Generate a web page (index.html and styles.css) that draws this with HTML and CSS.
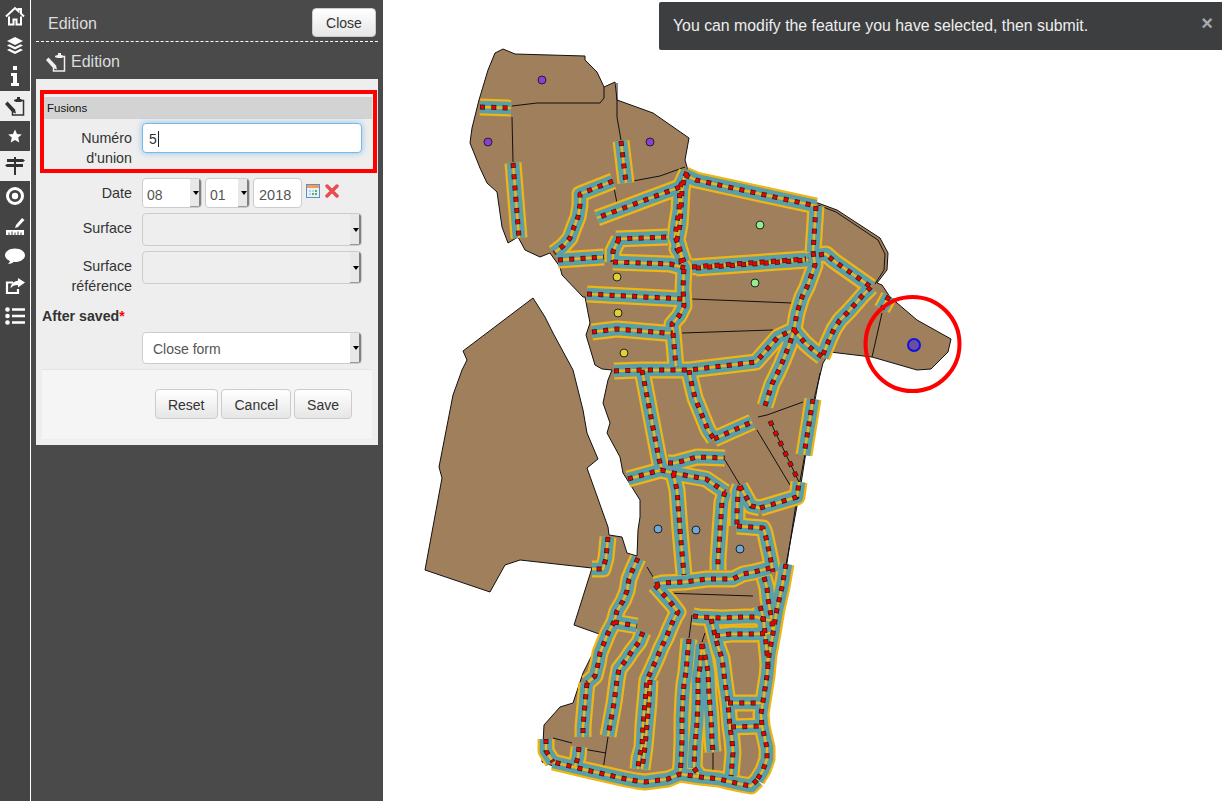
FILE: index.html
```html
<!DOCTYPE html>
<html lang="en">
<head>
  <meta charset="UTF-8" />
  <meta name="viewport" content="width=device-width, initial-scale=1.0"/>
  <title>Edition</title>
  <link rel="stylesheet" href="styles.css">
</head>
<body>
  <svg class="sprites" width="0" height="0">
    <symbol id="icon-edit" viewBox="0 0 20 20">
      <path d="M9 4.500h9.500v14.500H7.500v-3" fill="none" stroke="currentColor" stroke-width="1.5"/>
      <path d="M10.500 6V3H12V1h3v2h1.500v3z" fill="currentColor"/>
      <path d="M0 8l2.500-2.500 7.500 8 1 4-4-1.500z" fill="currentColor"/>
    </symbol>
  </svg>

  <nav class="rail">
    <a class="rail-item">
      <svg viewBox="0 0 20 20"><path d="M1 10.500L10 2l3.500 3.300V3H16v4.600l3 2.900" fill="none" stroke="currentColor" stroke-width="2"/><path d="M4 10.500V18.500h4.500v-5h3v5H16v-8" fill="none" stroke="currentColor" stroke-width="2"/></svg>
    </a>
    <a class="rail-item">
      <svg viewBox="0 0 20 20"><path d="M10 1l8 4-8 4-8-4zM4.500 8.200L10 11l5.500-2.800 2.500 1.300-8 4-8-4zM4.500 12.700L10 15.500l5.500-2.800 2.500 1.300-8 4-8-4z" fill="currentColor"/></svg>
    </a>
    <a class="rail-item">
      <svg viewBox="0 0 20 20"><path d="M8 0h4v4H8zM6 7h6v10h2v3H6v-3h2v-7H6z" fill="currentColor"/></svg>
    </a>
    <a class="rail-item is-active">
      <svg><use href="#icon-edit"/></svg>
    </a>
    <a class="rail-item">
      <svg viewBox="0 0 20 20"><path d="M10 3.500l2 4.500 4.800.4-3.600 3.200 1.100 4.800L10 13.900l-4.300 2.500 1.100-4.800-3.600-3.200L8 8z" fill="currentColor"/></svg>
    </a>
    <a class="rail-item is-active">
      <svg viewBox="0 0 20 20"><path d="M9 1h2v2h7l2 1.500L18 6h-7v2h7v3h-7v8H9v-8H2L0 9.500 2 8h7V6H2V3h7z" fill="currentColor"/></svg>
    </a>
    <a class="rail-item">
      <svg viewBox="0 0 20 20"><circle cx="10" cy="10" r="7.5" fill="none" stroke="currentColor" stroke-width="3"/><circle cx="10" cy="10" r="3.2" fill="currentColor"/></svg>
    </a>
    <a class="rail-item">
      <svg viewBox="0 0 20 20"><path d="M11 9l6-7 2.500 2-6.500 7-3 1zM1 14h18v5H1z" fill="currentColor"/><path d="M4 16.500V19M7 15.500V19M10 16.500V19M13 15.500V19M16 16.500V19" stroke="#444" stroke-width="1"/></svg>
    </a>
    <a class="rail-item">
      <svg viewBox="0 0 20 20"><path d="M10 2.500c5.500 0 10 2.900 10 6.800s-4.500 6.800-10 6.800h-1.500C7 17.500 5 18 3 18c1-.8 1.800-2 2-3C2 13.800 0 11.800 0 9.300 0 5.400 4.500 2.500 10 2.500z" fill="currentColor"/></svg>
    </a>
    <a class="rail-item">
      <svg viewBox="0 0 20 20"><path d="M13 2l7 4.500-7 5V9c-3.500 0-6 1-7.500 3.500C5.800 8 8.500 5 13 4.700z" fill="currentColor"/><path d="M8 6.500H2V17h11v-4" fill="none" stroke="currentColor" stroke-width="2.2"/></svg>
    </a>
    <a class="rail-item">
      <svg viewBox="0 0 20 20"><circle cx="2.500" cy="3.500" r="2.300" fill="currentColor"/><circle cx="2.500" cy="10" r="2.300" fill="currentColor"/><circle cx="2.500" cy="16.500" r="2.300" fill="currentColor"/><path d="M7 2.200h13v2.600H7zM7 8.700h13v2.600H7zM7 15.200h13v2.600H7z" fill="currentColor"/></svg>
    </a>
  </nav>

  <aside class="panel">
    <header class="panel-head">
      <h2>Edition</h2>
      <button class="btn btn-close" type="button">Close</button>
    </header>
    <h3 class="panel-sub"><svg><use href="#icon-edit"/></svg>Edition</h3>

    <form class="form">
      <div class="fusions">
        <div class="legend">Fusions</div>
        <div class="row row-first">
          <label>Numéro d'union</label>
          <div class="input is-focus">5</div>
        </div>
      </div>

      <div class="row row-date">
        <label>Date</label>
        <div class="select select-day">08</div>
        <div class="select select-month">01</div>
        <div class="input input-year">2018</div>
        <svg class="calendar" viewBox="0 0 14 14">
          <rect x="0.5" y="0.5" width="13" height="13" fill="#e8f0fa" stroke="#5f8fc8"/>
          <rect x="1" y="1" width="12" height="3" fill="#f0a050"/>
          <path d="M3 6h2v2H3zM6 6h2v2H6zM3 9h2v2H3z" fill="#bcd0e8"/>
          <path d="M9 6h2v2H9zM6 9h2v2H6zM9 9h2v2H9z" fill="#58b058"/>
        </svg>
        <svg class="clear" viewBox="0 0 14 14"><path d="M2 2l10 10M12 2L2 12" stroke="#ea4a50" stroke-width="3.4" stroke-linecap="round"/></svg>
      </div>

      <div class="row row-tall">
        <label>Surface</label>
        <div class="select select-wide is-disabled"></div>
      </div>
      <div class="row row-tall">
        <label>Surface référence</label>
        <div class="select select-wide is-disabled"></div>
      </div>

      <div class="after-saved">After saved<span class="req">*</span></div>
      <div class="row row-close">
        <label></label>
        <div class="select select-wide select-form">Close form</div>
      </div>

      <div class="actions">
        <button class="btn btn-reset" type="button">Reset</button>
        <button class="btn" type="button">Cancel</button>
        <button class="btn" type="button">Save</button>
      </div>
    </form>
  </aside>

  <main class="map">
    <svg class="map-canvas" viewBox="383 0 839 801" width="839" height="801">
      <defs>
        <g id="roads">
          <path d="M480 107L511 108"/>
          <path d="M513 163L519 238"/>
          <path d="M621 141L626 183"/>
          <path d="M613 181L580 194L580 205L578 217L574 227L570 238L563 246L554 253"/>
          <path d="M680 187L597 218"/>
          <path d="M558 260L604 257"/>
          <path d="M616 239L668 237"/>
          <path d="M619 239L613 251L613 262"/>
          <path d="M613 262L670 264L685 268"/>
          <path d="M687 172L680 187L679 210L677 222L675 237L678 244L677 249L681 255L681 263L684 268L683 288L684 306L679 316L672 324L673 333L674 344L675 356L676 367"/>
          <path d="M684 180L682 190L681 210L680 225L677 240L680 250L684 262"/>
          <path d="M692 267L806 259"/>
          <path d="M696 268L809 260"/>
          <path d="M685 175L696 180L816 206"/>
          <path d="M816 206L813 252"/>
          <path d="M813 252L815 265L811 276L807 287L802 297L797 313L794 330L790 343L782 363L777 374L772 384L765 406"/>
          <path d="M819 255L826 254L834 261L871 287"/>
          <path d="M871 287L863 295L856 303L848 312L840 320L834 329L829 340L822 357"/>
          <path d="M794 330L805 343L813 350L822 357"/>
          <path d="M889 296L882 309"/>
          <path d="M587 294L684 299"/>
          <path d="M592 332L617 329L665 333L673 333"/>
          <path d="M614 371L642 370L689 370L756 362L778 337L793 330"/>
          <path d="M642 370L659 459L662 470"/>
          <path d="M628 479L661 470L673 473L684 475L706 479L725 492"/>
          <path d="M668 463L675 463L697 457L725 458"/>
          <path d="M673 473L677 490L680 530L684 575"/>
          <path d="M689 370L690 377L695 398L708 430L714 439"/>
          <path d="M714 439L752 422"/>
          <path d="M813 399L804 455"/>
          <path d="M725 492L722 502L718 560L718 570"/>
          <path d="M740 486L738 492L737 513L737 526"/>
          <path d="M740 486L751 506L760 508"/>
          <path d="M760 508L797 497L799 482"/>
          <path d="M737 526L763 528L765 533L770 556L773 572"/>
          <path d="M764 577L767 588L768 599L770 610L772 622L773 633"/>
          <path d="M786 564L782 587L777 609L773 633L769 655L767 676L761 714L762 726L767 748L767 759L763 770L757 780"/>
          <path d="M757 780L751 786L740 784L731 782L719 779L700 777L680 774L668 779L645 782L637 781L626 779L604 774L582 769L553 762"/>
          <path d="M546 739L546 751L553 762"/>
          <path d="M579 747L578 757L575 767"/>
          <path d="M638 558L633 569L629 579L627 591L623 601L617 611L614 622L608 633L604 643L600 653L598 664L595 676L587 683"/>
          <path d="M614 622L637 626"/>
          <path d="M643 632L639 642L632 651L626 660L619 669L617 680L614 703L610 725L608 736"/>
          <path d="M587 683L586 693L583 727L583 737"/>
          <path d="M608 537L606 558L603 569L592 569"/>
          <path d="M655 585L663 594L671 603L678 612L675 617L670 628L666 638L661 648L657 658L652 669L647 680L646 691L645 702L644 713L643 725L642 747L639 758L638 769"/>
          <path d="M650 680L649 702L647 725L645 747L642 769"/>
          <path d="M655 585L662 583L684 582L707 579L733 579L743 574L754 572L770 568"/>
          <path d="M689 639L686 672L684 684L683 696L682 718L682 740L681 763L680 774"/>
          <path d="M702 644L700 667L698 678L698 700L697 723L695 745L694 768"/>
          <path d="M702 644L706 660L708 672L709 695L711 718L712 740L713 752"/>
          <path d="M711 619L718 647L722 658L725 682L728 703L730 727L732 740L733 753L731 776"/>
          <path d="M693 616L699 617L722 618L745 617L756 617L772 621"/>
          <path d="M715 636L731 634L753 634L773 633"/>
          <path d="M760 606L763 617L765 633L767 653L768 664"/>
          <path d="M728 703L762 703"/>
          <path d="M731 727L762 726"/>
          <path d="M694 768L700 777"/>
        </g>
      </defs>

      <path class="land" d="M503 49L515 54L585 56L585 60L597 72L604 87L615 82L617 100L653 113L689 138L685 160L687 167L688 173L818 203L837 210L880 238L888 253L887 270L877 283L882 285L890 297L917 320L951 339L948 352L931 369L917 370L872 357L830 352L823 363L815 395L800 490L785 570L775 640L765 700L772 750L757 782L700 777L640 782L570 772L542 762L544 725L560 707L573 703L583 673L602 635L574 625L592 568L520 560L505 565L490 592L425 570L442 478L439 467L453 395L462 370L467 360L463 351L533 298L545 317L553 333L573 370L583 410L587 433L598 459L587 468L608 527L609 535L622 537L627 553L637 556L638 530L640 517L640 500L623 473L620 457L607 433L610 423L603 403L608 380L612 370L602 369L595 365L586 335L590 323L585 297L583 297L562 275L560 267L550 253L540 257L525 250L518 237L508 243L502 227L497 192L487 183L480 168L470 143L472 128L479 100L488 70L495 53Z"/>

      <path class="edge" d="M818 205L836 212L878 240L885 254L884 270L875 284"/>
      <path class="edge" d="M512 106L537 103L600 103L604 98L604 87"/>
      <path class="edge" d="M512 117L513 162"/>
      <path class="edge" d="M617 83L617 117L621 140"/>
      <path class="edge" d="M633 181L660 176L685 167"/>
      <path class="edge" d="M613 183L617 203"/>
      <path class="edge" d="M692 299L792 303"/>
      <path class="edge" d="M682 333L773 330"/>
      <path class="edge" d="M758 417L767 415L803 402"/>
      <path class="edge" d="M757 430L790 485"/>
      <path class="edge" d="M725 460L740 485"/>
      <path class="edge" d="M820 373L797 497L787 563L777 620"/>
      <path class="edge" d="M647 567L655 580"/>
      <path class="edge" d="M663 593L753 596"/>
      <path class="edge" d="M692 615L689 638"/>
      <path class="edge" d="M705 633L702 642"/>
      <path class="edge" d="M608 737L603 770"/>
      <path class="edge" d="M583 749L606 753"/>
      <path class="edge" d="M572 743L553 738"/>
      <path class="edge" d="M713 753L713 773"/>
      <path class="edge" d="M882 313L872 357"/>

      <use href="#roads" class="road-casing"/>
      <use href="#roads" class="road-fill"/>
      <use href="#roads" class="road-centre"/>
      <use href="#roads" class="road-dot-edge"/>
      <use href="#roads" class="road-dot"/>

      <path class="edge" d="M770 421L799 482"/>
      <path class="road-dot-edge" d="M770 421L799 482"/>
      <path class="road-dot" d="M770 421L799 482"/>

      <circle class="pt pt-purple" cx="542" cy="80" r="4"/>
      <circle class="pt pt-purple" cx="488" cy="142" r="4"/>
      <circle class="pt pt-purple" cx="650" cy="142" r="4"/>
      <circle class="pt pt-green" cx="760" cy="225" r="4"/>
      <circle class="pt pt-green" cx="755" cy="283" r="4"/>
      <circle class="pt pt-yellow" cx="617" cy="277" r="4"/>
      <circle class="pt pt-yellow" cx="618" cy="313" r="4"/>
      <circle class="pt pt-yellow" cx="624" cy="353" r="4"/>
      <circle class="pt pt-blue" cx="658" cy="529" r="4"/>
      <circle class="pt pt-blue" cx="696" cy="530" r="4"/>
      <circle class="pt pt-blue" cx="740" cy="549" r="4"/>
      <circle class="pt-selected" cx="914" cy="345" r="6"/>
      <circle class="ring" cx="912.5" cy="344" r="47"/>
    </svg>

    <div class="toast">
      <span>You can modify the feature you have selected, then submit.</span>
      <span class="toast-x">×</span>
    </div>
  </main>
</body>
</html>
```

FILE: styles.css
```css
* {
  box-sizing: border-box;
}

body {
  margin: 0;
  width: 1222px;
  height: 801px;
  overflow: hidden;
  display: flex;
  background-color: #fff;
  font-family: "Liberation Sans", Arial, sans-serif;
  font-size: 14px;
  color: #333;
}

.sprites {
  position: absolute;
}

/* left icon bar */
.rail {
  width: 31px;
  padding-top: 1px;
  flex: none;
  background-color: #444;
  border-right: 1px solid #fff;
}

.rail-item {
  display: flex;
  align-items: center;
  justify-content: center;
  height: 30px;
  color: #fff;
}

.rail-item svg {
  width: 20px;
  height: 20px;
}

.rail-item.is-active {
  background-color: #eee;
  color: #333;
}

/* edition dock */
.panel {
  width: 352px;
  flex: none;
  padding: 0 5px;
  background-color: #4a4a4a;
}

.panel-head {
  display: flex;
  align-items: center;
  justify-content: space-between;
  height: 42px;
  padding: 3px 2px 0 12px;
  border-bottom: 1px dashed #fff;
}

.panel-head h2,
.panel-sub {
  margin: 0;
  font-size: 16px;
  font-weight: normal;
  color: #ddd;
}

.panel-head h2 {
  margin-top: 3px;
}

.panel-sub {
  display: flex;
  align-items: center;
  height: 37px;
  padding: 2px 0 0 10px;
}

.panel-sub svg {
  width: 20px;
  height: 20px;
  margin-right: 5px;
  color: #eee;
}

.form {
  height: 366px;
  padding-top: 11px;
  background-color: #eee;
}

.fusions {
  width: 337px;
  height: 83px;
  margin-left: 4px;
  padding-top: 3px;
  border: 4px solid #f00;
}

.legend {
  height: 22px;
  width: 328px;
  padding-left: 3px;
  background-color: #d3d3d3;
  font-size: 11.5px;
  line-height: 22px;
  color: #111;
}

.row {
  display: flex;
  align-items: flex-start;
  margin-top: 5px;
  margin-left: 8px;
}

.row label {
  width: 88px;
  margin-right: 10px;
  padding-top: 5px;
  flex: none;
  font-size: 14.3px;
  text-align: right;
  line-height: 20px;
}

.fusions .row {
  margin: 4px 0 0;
}

.input,
.select {
  height: 30px;
  background-color: #fff;
  border: 1px solid #ccc;
  border-radius: 4px;
  line-height: 32px;
  padding-left: 4px;
  color: #555;
}

.input.is-focus {
  width: 220px;
  padding-left: 6px;
  border-color: #7ab8e8;
  box-shadow: 0 0 6px rgba(82, 168, 236, 0.6);
  color: #333;
  line-height: 30px;
}

.input.is-focus::after {
  content: "";
  display: inline-block;
  width: 1px;
  height: 16px;
  margin-left: 1px;
  vertical-align: -3px;
  background-color: #222;
}

.select {
  position: relative;
  overflow: hidden;
}

/* the native spinner strip at the right of each select */
.select::before {
  content: "";
  position: absolute;
  top: 0;
  right: 0;
  bottom: 0;
  width: 9px;
  background-color: #e8e8e8;
  border-right: 2px solid #808080;
  border-bottom: 1px solid #999;
}

.select::after {
  content: "";
  position: absolute;
  top: 50%;
  right: 2px;
  margin-top: -2px;
  border-left: 3px solid transparent;
  border-right: 3px solid transparent;
  border-top: 4px solid #000;
}

.select-day {
  width: 60px;
  margin-right: 3px;
}

.select-month {
  width: 45px;
  margin-right: 3px;
}

.input-year {
  width: 49px;
  padding-left: 5px;
  font-size: 14.5px;
}

.calendar,
.clear {
  width: 14px;
  height: 14px;
  margin-top: 6px;
}

.calendar {
  margin-left: 4px;
}

.clear {
  margin-left: 5px;
}

.select-wide {
  width: 220px;
}

.row-tall .select {
  height: 33px;
}

.row-tall + .row-tall {
  height: 45px;
}

.select.is-disabled {
  background-color: #eee;
}

.after-saved {
  margin: 10px 0 0 6px;
  font-size: 14.2px;
  font-weight: bold;
  line-height: 20px;
}

.req {
  color: #f00;
}

.row-close {
  margin-top: 6px;
}

.select-form {
  height: 32px;
  padding-left: 10px;
  line-height: 32px;
}

.row-close label {
  padding-top: 0;
}

.actions {
  display: flex;
  justify-content: flex-end;
  gap: 3px;
  height: 70px;
  margin: 5px 6px 0;
  padding: 19px 20px 0 0;
  background-color: #f5f5f5;
  border-top: 1px solid #e5e5e5;
}

.btn {
  height: 30px;
  padding: 2px 12px 0;
  background: linear-gradient(#fff, #e6e6e6);
  border: 1px solid #ccc;
  border-radius: 4px;
  font-family: inherit;
  font-size: 14px;
  color: #333;
}

.btn-reset {
  padding: 2px 13px 0 12px;
}

.btn-close {
  width: 64px;
  height: 29px;
  padding: 2px 0 0;
}

/* map */
.map {
  position: relative;
  flex: 1;
}

.map-canvas {
  display: block;
}

.land {
  fill: #a07f5c;
  stroke: #111;
  stroke-width: 1;
  stroke-linejoin: round;
}

.edge {
  fill: none;
  stroke: #111;
  stroke-width: 1;
}

.road-casing,
.road-fill,
.road-centre,
.road-dot-edge,
.road-dot {
  fill: none;
  stroke-linejoin: round;
}

.road-casing {
  stroke: #f0b414;
  stroke-width: 17;
}

.road-fill {
  stroke: #5a9ea8;
  stroke-width: 12.5;
}

.road-centre {
  stroke: #f0b414;
  stroke-width: 2.4;
}

.road-dot-edge {
  stroke: #222;
  stroke-width: 5;
  stroke-dasharray: 5 6.3;
}

.road-dot {
  stroke: #ee0000;
  stroke-width: 3.6;
  stroke-dasharray: 3.6 7.7;
  stroke-dashoffset: -0.7;
}

.pt {
  stroke: #222;
  stroke-width: 1;
}

.pt-purple { fill: #8a3fd8; }
.pt-green { fill: #90ee90; }
.pt-yellow { fill: #e0d032; }
.pt-blue { fill: #6ca8d8; }

.pt-selected {
  fill: #6a4fa0;
  stroke: #1212e0;
  stroke-width: 2;
}

.ring {
  fill: none;
  stroke: #f00;
  stroke-width: 4;
}

.toast {
  position: absolute;
  top: 2px;
  right: 0;
  display: flex;
  align-items: center;
  justify-content: space-between;
  width: 563px;
  height: 48px;
  padding: 0 9px 0 14px;
  background-color: #3d3e40;
  border-radius: 2px 0 0 2px;
  font-size: 15.85px;
  color: #eee;
}

.toast-x {
  margin-top: -5px;
  font-size: 20px;
  font-weight: bold;
  color: #aaa;
}
```
